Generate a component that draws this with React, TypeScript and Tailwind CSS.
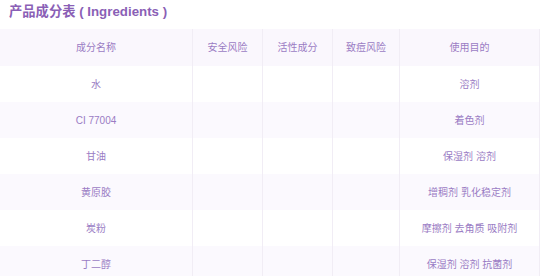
const rows = [
  { name: '水', use: '溶剂' },
  { name: 'CI 77004', use: '着色剂' },
  { name: '甘油', use: '保湿剂 溶剂' },
  { name: '黄原胶', use: '增稠剂 乳化稳定剂' },
  { name: '炭粉', use: '摩擦剂 去角质 吸附剂' },
  { name: '丁二醇', use: '保湿剂 溶剂 抗菌剂' },
];

const cell = 'flex items-center justify-center border-r border-[#f1edf5]';

export default function App() {
  return (
    <div className="w-[549px] h-[276px] overflow-hidden bg-white font-['Liberation_Sans','Noto_Sans_CJK_SC',sans-serif]">
      {/* Title */}
      <div className="h-[29px] pl-[9px] pt-[2px] text-[13.3px] font-bold leading-[20px] text-[#8a5fb6]">
        产品成分表 ( Ingredients )
      </div>

      {/* Table */}
      <div className="w-[540px] text-[10px] text-[#9a7cc4]">
        <div className="grid h-[37px] grid-cols-[193px_70px_70px_67px_140px] bg-[#faf7fd]">
          <div className={cell}>成分名称</div>
          <div className={cell}>安全风险</div>
          <div className={cell}>活性成分</div>
          <div className={cell}>致痘风险</div>
          <div className={cell}>使用目的</div>
        </div>
        {rows.map((r, i) => (
          <div
            key={r.name}
            className={`grid h-[36px] grid-cols-[193px_70px_70px_67px_140px] ${
              i % 2 === 1 ? 'bg-[#fbf9fe]' : 'bg-white'
            }`}
          >
            <div className={cell}>{r.name}</div>
            <div className={cell}></div>
            <div className={cell}></div>
            <div className={cell}></div>
            <div className={cell}>{r.use}</div>
          </div>
        ))}
      </div>
    </div>
  );
}
